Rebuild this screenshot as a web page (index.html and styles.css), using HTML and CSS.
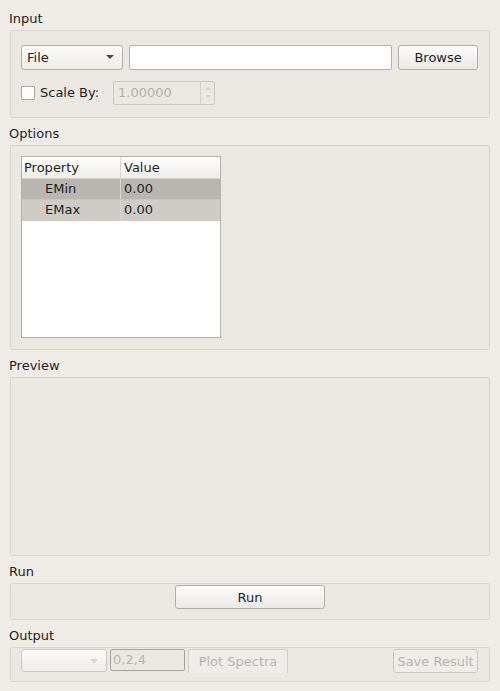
FILE: index.html
```html
<!DOCTYPE html>
<html>
<head>
<meta charset="utf-8">
<link rel="stylesheet" href="styles.css">
</head>
<body>
  <div class="title first">Input</div>
  <div class="group input-group">
    <div class="row row1">
      <div class="combo file-combo"><span>File</span><span class="arrow"></span></div>
      <div class="lineedit path-edit"></div>
      <div class="button browse">Browse</div>
    </div>
    <div class="row row2">
      <div class="checkbox"></div>
      <span class="check-label">Scale By:</span>
      <div class="spinbox">
        <span class="spin-text">1.00000</span>
        <div class="spin-arrows">
          <span class="up"></span>
          <span class="down"></span>
        </div>
      </div>
    </div>
  </div>

  <div class="title">Options</div>
  <div class="group options-group">
    <div class="table">
      <div class="thead">
        <div class="cell c1">Property</div>
        <div class="cell c2">Value</div>
      </div>
      <div class="trow sel">
        <div class="cell c1 indent">EMin</div>
        <div class="cell c2">0.00</div>
      </div>
      <div class="trow alt">
        <div class="cell c1 indent">EMax</div>
        <div class="cell c2">0.00</div>
      </div>
    </div>
  </div>

  <div class="title">Preview</div>
  <div class="group preview-group"></div>

  <div class="title">Run</div>
  <div class="group run-group">
    <div class="button run">Run</div>
  </div>

  <div class="title">Output</div>
  <div class="group output-group">
    <div class="combo out-combo disabled"><span></span><span class="arrow light"></span></div>
    <div class="lineedit out-edit disabled">0,2,4</div>
    <div class="button plot disabled">Plot Spectra</div>
    <div class="spacer"></div>
    <div class="button save disabled">Save Result</div>
  </div>
</body>
</html>
```

FILE: styles.css
```css
html, body {
  margin: 0;
  padding: 0;
}
body {
  background: #efebe7;
  font-family: "DejaVu Sans", sans-serif;
  font-size: 13px;
  color: #1e1e1e;
  padding: 0 10px;
  width: 480px;
}
.title {
  height: 16px;
  line-height: 16px;
  margin: 0 0 3px -1px;
}
.title.first {
  margin-top: 11px;
}
.group {
  border: 1px solid #d9d5d1;
  border-radius: 2px;
  background: #ebe8e4;
  margin-bottom: 8px;
  box-sizing: border-box;
}
.input-group {
  height: 88px;
  padding: 14px 11px 0 10px;
}
.row {
  display: flex;
  align-items: center;
}
.row1 {
  height: 24px;
  gap: 6px;
}
.row2 {
  height: 23px;
  margin-top: 12px;
}
.combo {
  box-sizing: border-box;
  border: 1px solid #b3afab;
  border-radius: 3px;
  background: linear-gradient(#fbfaf9, #eeece9);
  display: flex;
  align-items: center;
  justify-content: space-between;
  padding: 0 8px 0 5px;
}
.file-combo {
  width: 102px;
  height: 25px;
}
.arrow {
  width: 0;
  height: 0;
  border-left: 4px solid transparent;
  border-right: 4px solid transparent;
  border-top: 4px solid #4a4a4a;
}
.arrow.light {
  border-top-color: #d6d3d0;
}
.lineedit {
  box-sizing: border-box;
  border: 1px solid #b3afab;
  border-radius: 2px;
  background: #ffffff;
}
.path-edit {
  width: 264px;
  height: 25px;
}
.button {
  box-sizing: border-box;
  border: 1px solid #b0aca8;
  border-radius: 3px;
  background: linear-gradient(#fcfcfb, #ebe9e6);
  display: flex;
  align-items: center;
  justify-content: center;
}
.browse {
  width: 80px;
  height: 25px;
}
.checkbox {
  box-sizing: border-box;
  width: 14px;
  height: 14px;
  border: 1px solid #a9a5a1;
  border-radius: 1px;
  background: #ffffff;
  margin-top: 1px;
}
.check-label {
  margin-left: 5px;
  width: 73px;
}
.spinbox {
  box-sizing: border-box;
  width: 102px;
  height: 24px;
  border: 1px solid #cbc7c3;
  border-radius: 2px;
  background: #ebe8e4;
  display: flex;
  color: #b3afab;
}
.spin-text {
  flex: 1;
  line-height: 22px;
  padding-left: 4px;
}
.spin-arrows {
  width: 13px;
  border-left: 1px solid #d4d0cc;
  display: flex;
  flex-direction: column;
  align-items: center;
  justify-content: center;
  gap: 5px;
}
.spin-arrows .up {
  width: 0;
  height: 0;
  border-left: 3px solid transparent;
  border-right: 3px solid transparent;
  border-bottom: 3px solid #d2cfcb;
}
.spin-arrows .down {
  width: 0;
  height: 0;
  border-left: 3px solid transparent;
  border-right: 3px solid transparent;
  border-top: 3px solid #d2cfcb;
}
.options-group {
  height: 205px;
  padding: 10px 0 0 10px;
}
.table {
  box-sizing: border-box;
  width: 200px;
  height: 182px;
  border: 1px solid #b3afab;
  background: #ffffff;
}
.thead {
  display: flex;
  height: 21px;
  border-bottom: 1px solid #d3d0cc;
  background: linear-gradient(#fdfdfc, #efedea);
}
.trow {
  display: flex;
  height: 21px;
}
.trow.sel {
  background: #b9b6b2;
  height: 20px;
  border-bottom: 1px solid #c8c5c1;
}
.trow.alt {
  background: #cfccc8;
}
.cell {
  line-height: 21px;
  box-sizing: border-box;
}
.trow .cell {
  line-height: 20px;
}
.c1 {
  width: 99px;
  padding-left: 2px;
  border-right: 1px solid #d8d5d1;
}
.c1.indent {
  padding-left: 23px;
}
.c2 {
  padding-left: 3px;
}
.preview-group {
  height: 179px;
}
.run-group {
  height: 37px;
  padding-top: 1px;
  display: flex;
  justify-content: center;
}
.run {
  width: 150px;
  height: 24px;
}
.output-group {
  height: 35px;
  padding: 1px 11px 0 10px;
  display: flex;
  align-items: flex-start;
  margin-bottom: 0;
}
.disabled {
  color: #b8b4b0;
}
.out-combo {
  width: 86px;
  height: 23px;
  border-color: #cbc7c3;
  margin-right: 3px;
}
.out-edit {
  width: 75px;
  height: 22px;
  background: #ebe8e4;
  border-color: #a8a4a0;
  margin-right: 3px;
  padding-left: 2px;
  line-height: 20px;
}
.plot {
  width: 100px;
  height: 24px;
  border-color: #d2cfcb;
  border-bottom: none;
  border-radius: 3px 3px 0 0;
  background: #efedea;
}
.spacer {
  flex: 1;
}
.save {
  width: 85px;
  height: 24px;
  border-color: #cbc7c3;
  background: #efedea;
}
```
